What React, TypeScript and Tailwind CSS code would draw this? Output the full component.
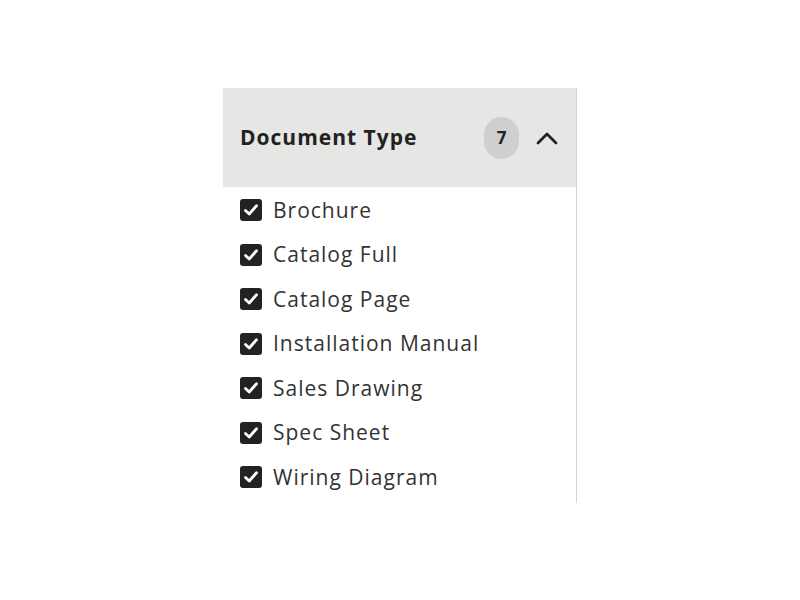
import React from "react";

const items = [
  "Brochure",
  "Catalog Full",
  "Catalog Page",
  "Installation Manual",
  "Sales Drawing",
  "Spec Sheet",
  "Wiring Diagram",
];

function CheckBox() {
  return (
    <span className="flex h-[22px] w-[22px] shrink-0 items-center justify-center rounded-[3px] bg-[#222222]">
      <svg width="18" height="18" viewBox="0 0 18 18" fill="none">
        <path d="M3.5 9.5 L7.2 13 L14.5 4.8" stroke="white" strokeWidth="2.8" strokeLinecap="round" strokeLinejoin="round" />
      </svg>
    </span>
  );
}

export default function App() {
  return (
    <div className="min-h-[600px] w-[800px] bg-white pl-[223px] pt-[88px]" style={{ fontFamily: '"Open Sans", "Noto Sans", sans-serif' }}>
      <div className="w-[354px] border-r border-[#d4d4d4] pb-[3px]">
        <div className="flex h-[99px] items-center bg-[#e6e6e4] pl-[17px] pr-[18px]">
          <span className="text-[21px] font-bold tracking-[1px] text-[#222222]">Document Type</span>
          <span className="ml-auto flex h-[42px] w-[35px] items-center justify-center rounded-full bg-[#cfcfcd] text-[17px] font-bold text-[#222222]">7</span>
          <svg className="ml-[17px]" width="22" height="14" viewBox="0 0 22 14" fill="none">
            <path d="M2 12 L11 3 L20 12" stroke="#222222" strokeWidth="2.8" strokeLinecap="round" strokeLinejoin="round" />
          </svg>
        </div>
        <div className="flex flex-col pt-[1px]">
          {items.map((t) => (
            <div key={t} className="flex h-[44.5px] items-center gap-[11px] pl-[17px]">
              <CheckBox />
              <span className="text-[21px] tracking-[1px] text-[#333333]">{t}</span>
            </div>
          ))}
        </div>
      </div>
    </div>
  );
}
